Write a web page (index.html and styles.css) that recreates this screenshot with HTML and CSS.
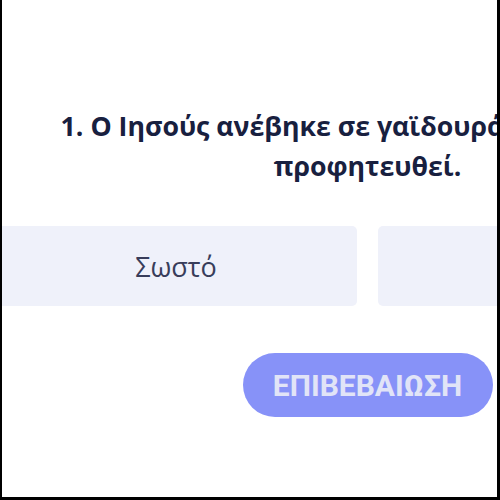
FILE: index.html
```html
<!DOCTYPE html>
<html lang="el">
<head>
<meta charset="utf-8">
<title>Ερώτηση</title>
<link rel="stylesheet" href="styles.css">
</head>
<body>
<div class="frame">
  <main class="quiz">
    <h1 class="question"><span class="line">1. Ο Ιησούς ανέβηκε σε γαϊδουράκι όπως είχε</span><br><span class="line">προφητευθεί.</span></h1>
    <div class="answers">
      <button class="answer" type="button">Σωστό</button>
      <button class="answer" type="button">Λάθος</button>
    </div>
    <div class="actions">
      <button class="confirm" type="button">ΕΠΙΒΕΒΑΙΩΣΗ</button>
    </div>
  </main>
</div>
</body>
</html>
```
FILE: styles.css
```css
html, body {
  margin: 0;
  padding: 0;
  overflow: hidden;
  background: #ffffff;
}

.frame {
  box-sizing: border-box;
  width: 500px;
  height: 500px;
  border-left: 2px solid #000;
  border-right: 3px solid #000;
  border-bottom: 3px solid #000;
  overflow: hidden;
  background: #fff;
}

.quiz {
  width: 745px;
  margin-left: -7px;
  padding-top: 106px;
  display: flex;
  flex-direction: column;
  align-items: center;
}

.question {
  margin: 0;
  width: 100%;
  text-align: center;
  font-family: "Open Sans", "Noto Sans", sans-serif;
  font-weight: 700;
  font-size: 26.7px;
  line-height: 40px;
  color: #18203f;
  white-space: nowrap;
}

.answers {
  margin-top: 40px;
  width: 100%;
  display: grid;
  grid-template-columns: 1fr 1fr;
  gap: 21px;
}

.answer {
  height: 80px;
  border: none;
  border-radius: 5px;
  background: #eff1fa;
  font-family: "Open Sans", "Noto Sans", sans-serif;
  font-size: 27px;
  font-weight: 400;
  color: #383d5a;
  padding: 0;
}

.actions {
  margin-top: 47px;
  display: flex;
  justify-content: center;
}

.confirm {
  width: 250px;
  height: 64px;
  border: none;
  border-radius: 32px;
  background: #8792f8;
  color: #e1e4f7;
  font-family: Roboto, "Noto Sans", sans-serif;
  font-weight: 700;
  font-size: 30px;
  padding: 0;
}
```
